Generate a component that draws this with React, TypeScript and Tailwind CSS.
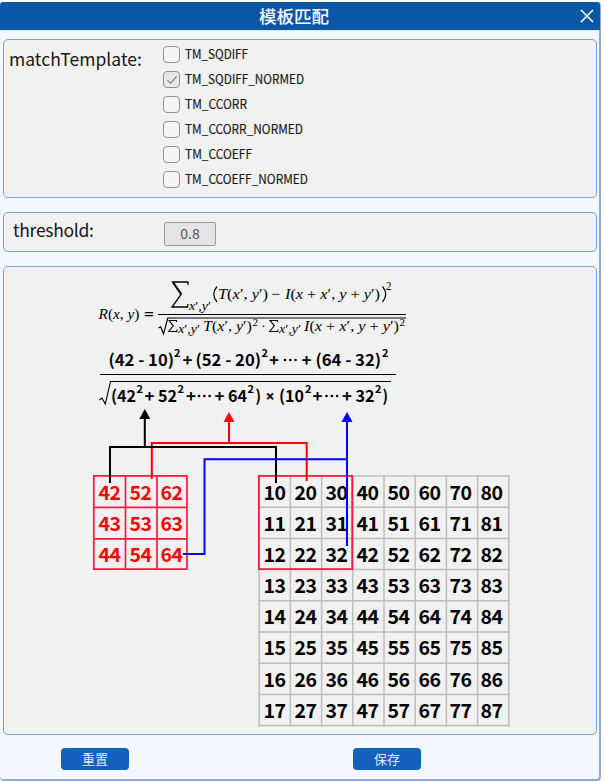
import { Fragment } from "react";

const methods = [
  { name: "TM_SQDIFF", width: "w-[63px]" },
  { name: "TM_SQDIFF_NORMED", width: "w-[119px]" },
  { name: "TM_CCORR", width: "w-[62px]" },
  { name: "TM_CCORR_NORMED", width: "w-[118px]" },
  { name: "TM_CCOEFF", width: "w-[67px]" },
  { name: "TM_CCOEFF_NORMED", width: "w-[123px]" },
];

type Piece = [text: string, x: number, width: number, y: number, size: number];

const mathPieces: Piece[] = [
  ["R(x, y)", 98.5, 41, 319, 15],
  ["x′,y′", 189, 22, 310, 12],
  ["T(x′, y′)", 218, 50, 299, 15],
  ["−", 271, 9, 299, 15],
  ["I(x + x′, y + y′)", 285, 95, 299, 15],
  ["2", 386, 5.5, 290, 11.5],
  ["x′,y′", 178, 22, 332.5, 11.5],
  ["T(x′, y′)", 203, 49, 331, 14.5],
  ["2", 252.5, 5.5, 326, 11],
  ["·", 261.5, 4, 331, 14.5],
  ["x′,y′", 279, 22, 332.5, 11.5],
  ["I(x + x′, y + y′)", 304, 95, 331, 14.5],
  ["2", 399.5, 5.5, 326, 11],
];

const numberPieces: Piece[] = [
  ["(42 - 10)", 108.5, 65.5, 365.7, 16],
  ["2", 174, 6.5, 357, 11],
  ["+", 182.5, 10, 365.7, 16],
  ["(52 - 20)", 195.5, 65.5, 365.7, 16],
  ["2", 261.5, 6.5, 357, 11],
  ["+", 269, 10, 365.7, 16],
  ["+", 301.5, 10, 365.7, 16],
  ["(64 - 32)", 315.5, 65.5, 365.7, 16],
  ["2", 382, 6.5, 357, 11],
  ["(42", 111, 25, 401.7, 16],
  ["2", 136.5, 6.5, 392.5, 11],
  ["+", 144.5, 10, 401.7, 16],
  ["52", 158, 19, 401.7, 16],
  ["2", 177.5, 6.5, 392.5, 11],
  ["+", 186, 10, 401.7, 16],
  ["+", 214.5, 10, 401.7, 16],
  ["64", 228, 19, 401.7, 16],
  ["2", 247.5, 6.5, 392.5, 11],
  [")", 255.5, 5.5, 401.7, 16],
  ["(10", 279, 25, 401.7, 16],
  ["2", 305, 6.5, 392.5, 11],
  ["+", 312.5, 10, 401.7, 16],
  ["+", 342, 10, 401.7, 16],
  ["32", 355.5, 19, 401.7, 16],
  ["2", 375, 6.5, 392.5, 11],
  [")", 382.5, 5.5, 401.7, 16],
];

const dots: [number, number][] = [
  [285, 360], [290.3, 360], [295.6, 360],
  [199, 396], [204.3, 396], [209.6, 396],
  [326.5, 396], [331.8, 396], [337.1, 396],
];

function Formulas() {
  return (
    <svg viewBox="94 274 320 134" className="ml-[90px] mt-[7px] block h-[134px] w-[320px]">
      <g className="font-['Liberation_Serif',serif]">
        {mathPieces.map(([t, x, w, y, s], i) => (
          <text key={i} x={x} y={y} fontSize={s} textLength={w} lengthAdjust="spacingAndGlyphs">
            {t.split("").map((c, j) => (
              <tspan key={j} fontStyle={/[a-zA-Z]/.test(c) ? "italic" : "normal"}>{c}</tspan>
            ))}
          </text>
        ))}
        <text x="144" y="319.5" fontSize="16" textLength="10" lengthAdjust="spacingAndGlyphs" className="font-bold">=</text>
      </g>
      <g fill="none" stroke="#000">
        <path d="M188 285v-3h-15.5l8.5 12.4l-9 12.6h15.5l.5-3" strokeWidth="1.3" />
        <path d="M173 282.3l8.4 12" strokeWidth="1.9" />
        <path d="M176.5 322v-1.5h-7.5l4.3 5.3l-4.6 5.7h8l.3-2" strokeWidth="1.1" />
        <path d="M277.5 322v-1.5h-7.5l4.3 5.3l-4.6 5.7h8l.3-2" strokeWidth="1.1" />
        <path d="M217 286.5q-6.5 7.8 0 15.5M382.5 286.5q6.5 7.8 0 15.5" strokeWidth="1.2" />
        <path d="M158 314.5H406" />
        <path d="M158.5 328l2.2-1.2l2.8 7l4.3-15.8H406" strokeWidth="1.2" />
        <path d="M100 374.5H396" strokeWidth="1.2" />
        <path d="M99.5 400l2.5-2l3.3 6l5.2-22.5H391" strokeWidth="1.1" />
      </g>
      <g className="font-['Noto_Sans_CJK_SC',sans-serif] font-bold">
        {numberPieces.map(([t, x, w, y, s], i) => (
          <text key={i} x={x} y={y} fontSize={s} textLength={w} lengthAdjust="spacingAndGlyphs">{t}</text>
        ))}
        <text x="265.5" y="401.7" fontSize="16" className="font-['Noto_Sans',sans-serif]">×</text>
      </g>
      {dots.map(([x, y], i) => <circle key={i} cx={x} cy={y} r="1.3" />)}
    </svg>
  );
}

function GridLines() {
  return (
    <svg viewBox="90 405 424 325" className="absolute left-0 top-0 h-[325px] w-[424px]" fill="none">
      <g stroke="#bdbdbd" strokeWidth="1.5">
        {Array.from({ length: 9 }, (_, i) => (
          <Fragment key={i}>
            <path d={`M${259.2 + i * 31.2} 475V726.5`} />
            <path d={`M258.5 ${476 + i * 31.2}H509.7`} />
          </Fragment>
        ))}
      </g>
      <path d="M93.8 475.8H187V569.2H93.8ZM125.5 475V569M157 475V569M93 507.3H187M93 538.8H187" stroke="#fb1740" strokeWidth="1.7" />
      <path d="M258.9 475.9H352.2V569.2H258.9Z" stroke="#fb1740" strokeWidth="1.8" />
    </svg>
  );
}

function Arrows() {
  return (
    <svg viewBox="90 405 424 325" className="absolute left-0 top-0 h-[325px] w-[424px]" fill="none" strokeWidth="2">
      <path d="M151.8 479V443H306.7V481M229 443V420" stroke="#f00" />
      <path d="M110 483V447H276V483M144.8 447V417" stroke="#000" />
      <path d="M183 554H204.5V459.2H347M347 546V420" stroke="#00f" />
      <path d="M144.8 409l5.5 10h-11z" fill="#000" />
      <path d="M229 412l5.5 10h-11z" fill="#f00" />
      <path d="M347 412l5.5 10h-11z" fill="#00f" />
    </svg>
  );
}

function Matrix({ size, className }: { size: number; className: string }) {
  return (
    <div className={`grid text-center text-[19.5px] leading-[31.1px] font-bold tracking-[-0.6px] ${className}`}>
      {Array.from({ length: size * size }, (_, i) => {
        const row = Math.floor(i / size);
        const col = i % size;
        return <span key={i}>{size === 3 ? 42 + col * 10 + row : 10 + col * 10 + row}</span>;
      })}
    </div>
  );
}

const panel = "rounded-[5px] border border-[#75a0e2] bg-[#f1f1f1]";
const button =
  "h-[22px] w-[68px] rounded-[4px] bg-[#1461bd] text-[13px] leading-[22px] text-[#dbe8f8]";

export default function App() {
  return (
    <div className="h-[782px] w-[604px] bg-white pt-[2px] font-['Noto_Sans_CJK_SC',sans-serif] text-black">
      <div className="flex h-[779px] w-[601px] flex-col rounded-[4px] border-r-2 border-b-2 border-[#8badd4] bg-[#f3f7ff]">
        <header className="-mr-px flex h-[28px] shrink-0 items-center rounded-t-[3px] bg-[#0c56a8] text-white">
          <h1 className="w-[587px] pl-[1px] text-center text-[17.5px] leading-[28px] font-medium">模板匹配</h1>
          <svg viewBox="0 0 14 14" className="-ml-[7px] h-[14px] w-[14px] shrink-0" fill="none" stroke="#fff" strokeWidth="1.6">
            <path d="M1 1L13 13M13 1L1 13" />
          </svg>
        </header>
        <main className="flex flex-col gap-[14px] border-t border-[#dfe9f6] pt-[8px] pr-[2px] pl-[3px]">
          <section className={`${panel} flex h-[159px]`}>
            <h2 className="ml-[5px] mt-[6px] w-[154px] text-[17.5px] leading-[26px] tracking-[0.02px] text-[#171717]">matchTemplate:</h2>
            <div className="flex flex-col pt-[2px]">
              {methods.map((m, i) => (
                <label key={m.name} className="flex h-[25px] items-center gap-[5px]">
                  <span className={`flex h-[17px] w-[17px] items-center justify-center rounded-[4px] border border-[#929292] ${i === 1 ? "bg-[#e8e8e8]" : "bg-[#f5f5f5]"}`}>
                    {i === 1 && (
                      <svg viewBox="0 0 12 12" className="h-[12px] w-[12px]" fill="none" stroke="#777" strokeWidth="1.1">
                        <path d="M1.4 6.2L4.6 9.3L10.6 2.4" />
                      </svg>
                    )}
                  </span>
                  <svg className={`h-[20px] overflow-visible ${m.width}`}>
                    <text y="14" fontSize="12.6" textLength="100%" lengthAdjust="spacingAndGlyphs" fill="#171717" stroke="#171717" strokeWidth="0.15">{m.name}</text>
                  </svg>
                </label>
              ))}
            </div>
          </section>
          <section className={`${panel} flex h-[40px]`}>
            <h2 className="ml-[9px] mt-[4px] w-[151px] text-[17.5px] leading-[26px] tracking-[-0.3px] text-[#171717]">threshold:</h2>
            <div className="mt-[9px] h-[24px] w-[52px] rounded-[2px] border border-[#9b9b9b] bg-[#e5e5e5] text-center text-[14px] leading-[21px] text-[#555]">0.8</div>
          </section>
          <section className={`${panel} h-[469px]`}>
            <Formulas />
            <div className="relative -mt-[3px] ml-[86px] flex h-[325px] w-[424px] items-start">
              <GridLines />
              <Matrix size={3} className="relative ml-[4px] mt-[71px] w-[93px] grid-cols-3 text-[#f00]" />
              <Matrix size={8} className="relative ml-[72px] mt-[71px] w-[248px] grid-cols-8" />
              <Arrows />
            </div>
          </section>
        </main>
        <footer className="flex gap-[224px] pt-[13px] pl-[61px]">
          <button className={button}>重置</button>
          <button className={button}>保存</button>
        </footer>
      </div>
    </div>
  );
}
